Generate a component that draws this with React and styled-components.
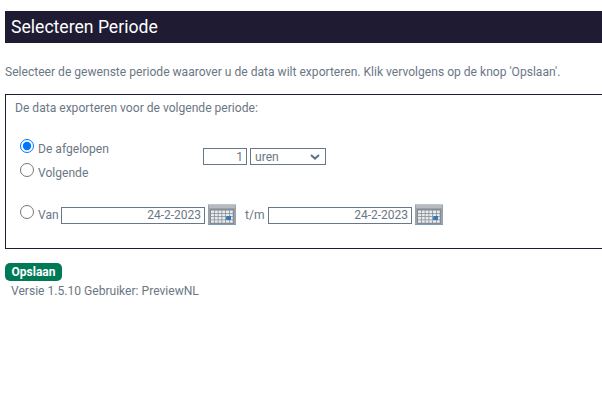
import styled, { createGlobalStyle } from "styled-components";

const GlobalStyle = createGlobalStyle`
  html, body {
    margin: 0;
    padding: 0;
    background: #fff;
    overflow: hidden;
  }
  body {
    font-family: Roboto, "Liberation Sans", sans-serif;
    font-size: 12.09px;
    color: #6b7785;
  }
`;

const Page = styled.div`
  width: 602px;
  height: 411px;
  padding: 11px 0 0 5px;
  box-sizing: border-box;
  overflow: hidden;
`;

const TitleBar = styled.h1`
  margin: 0;
  height: 32px;
  padding-left: 6px;
  background: #1e1b33;
  color: #fff;
  font-size: 17.6px;
  font-weight: 400;
  line-height: 32px;
`;

const Intro = styled.p`
  margin: 22px 0 0;
  height: 15px;
  line-height: 15px;
`;

const PeriodBox = styled.div`
  margin-top: 14px;
  width: 620px;
  height: 155px;
  box-sizing: border-box;
  border: 1px solid #1e1b33;
  padding: 6px 0 0 9px;
`;

const BoxTitle = styled.div`
  height: 15px;
  line-height: 15px;
`;

const RelativeRow = styled.div`
  display: flex;
  align-items: flex-start;
  margin: 22px 0 0 5px;
`;

const RadioColumn = styled.div`
  display: flex;
  flex-direction: column;
  gap: 8px;
  width: 183px;
  padding-top: 3px;
`;

const RadioLabel = styled.label`
  display: flex;
  align-items: center;
  gap: 4px;
  height: 16px;
  line-height: 16px;
`;

const Radio = styled.input.attrs({ type: "radio", name: "periode" })`
  width: 14px;
  height: 14px;
  margin: -7px 0 0;
`;

const Field = styled.input`
  box-sizing: border-box;
  width: ${(p) => p.$width}px;
  height: 17px;
  border: 1px solid #66788a;
  padding: 0 3px;
  margin: 0;
  font-family: inherit;
  font-size: 12px;
  color: #6b7785;
  text-align: right;
  background: #fff;
  outline: none;
`;

const UnitControls = styled.div`
  display: flex;
  gap: 3px;
  margin-top: 10px;
`;

const SelectWrap = styled.div`
  position: relative;
  width: 76px;
  height: 17px;
`;

const UnitSelect = styled.select`
  display: block;
  box-sizing: border-box;
  width: 100%;
  height: 100%;
  border: 1px solid #66788a;
  border-radius: 0;
  padding: 0 0 0 4px;
  font: inherit;
  color: #6b7785;
  background: #fff;
  appearance: none;
`;

const Chevron = styled.svg`
  position: absolute;
  top: 6px;
  right: 6px;
  pointer-events: none;
`;

const RangeRow = styled.div`
  display: flex;
  align-items: center;
  margin: 23px 0 0 5px;
  height: 22px;
`;

const VanLabel = styled(RadioLabel)`
  width: 41px;
  flex: none;
`;

const CalendarButton = styled.button`
  display: block;
  width: 28px;
  height: 21px;
  margin: -1px 0 0 3px;
  padding: 0;
  border: 0;
  background: none;
`;

const UntilLabel = styled.span`
  width: 32px;
  flex: none;
  padding-left: 9px;
  box-sizing: border-box;
`;

const SaveButton = styled.button`
  display: block;
  margin-top: 14px;
  width: 57px;
  height: 18px;
  padding: 0;
  border: 0;
  border-radius: 5px;
  background: #007a56;
  color: #fff;
  font-family: inherit;
  font-size: 12px;
  font-weight: 700;
  line-height: 18px;
`;

const Footer = styled.div`
  margin: 3px 0 0 6px;
  height: 15px;
  line-height: 15px;
`;

function CalendarIcon() {
  const cells = [];
  for (let r = 0; r < 4; r++) {
    for (let c = 0; c < 6; c++) {
      const active = r === 2 && c === 4;
      if (active) continue;
      cells.push(
        <rect
          key={`${r}-${c}`}
          x={3 + c * 3.75}
          y={6.5 + r * 3.25}
          width="3"
          height="2.5"
          fill="#e8eaec"
        />
      );
    }
  }
  return (
    <svg width="28" height="21" viewBox="0 0 28 21">
      <rect x="0" y="0" width="28" height="21" fill="#9aa3ac" />
      <rect x="0" y="0" width="28" height="1" fill="#c2c6ca" />
      <rect x="1" y="1" width="26" height="3" fill="#b6bbc0" />
      <rect x="0" y="20" width="28" height="1" fill="#7d9dbd" />
      <rect x="2" y="5" width="24" height="15" fill="#838c95" />
      {cells}
      <rect x="18.5" y="12" width="4.5" height="4" fill="#2f78bf" />
    </svg>
  );
}

function App() {
  return (
    <Page>
      <GlobalStyle />
      <TitleBar>Selecteren Periode</TitleBar>
      <Intro>
        Selecteer de gewenste periode waarover u de data wilt exporteren. Klik
        vervolgens op de knop 'Opslaan'.
      </Intro>
      <PeriodBox>
        <BoxTitle>De data exporteren voor de volgende periode:</BoxTitle>
        <RelativeRow>
          <RadioColumn>
            <RadioLabel>
              <Radio defaultChecked />
              De afgelopen
            </RadioLabel>
            <RadioLabel>
              <Radio />
              Volgende
            </RadioLabel>
          </RadioColumn>
          <UnitControls>
            <Field $width={44} defaultValue="1" />
            <SelectWrap>
              <UnitSelect defaultValue="uren">
                <option value="uren">uren</option>
                <option value="dagen">dagen</option>
              </UnitSelect>
              <Chevron width="10" height="6" viewBox="0 0 10 6">
                <path d="M1 1l4 3.6L9 1" fill="none" stroke="#5f7183" strokeWidth="2" />
              </Chevron>
            </SelectWrap>
          </UnitControls>
        </RelativeRow>
        <RangeRow>
          <VanLabel>
            <Radio />
            Van
          </VanLabel>
          <Field $width={144} defaultValue="24-2-2023" />
          <CalendarButton>
            <CalendarIcon />
          </CalendarButton>
          <UntilLabel>t/m</UntilLabel>
          <Field $width={144} defaultValue="24-2-2023" />
          <CalendarButton>
            <CalendarIcon />
          </CalendarButton>
        </RangeRow>
      </PeriodBox>
      <SaveButton>Opslaan</SaveButton>
      <Footer>Versie 1.5.10 Gebruiker: PreviewNL</Footer>
    </Page>
  );
}

export default App;
